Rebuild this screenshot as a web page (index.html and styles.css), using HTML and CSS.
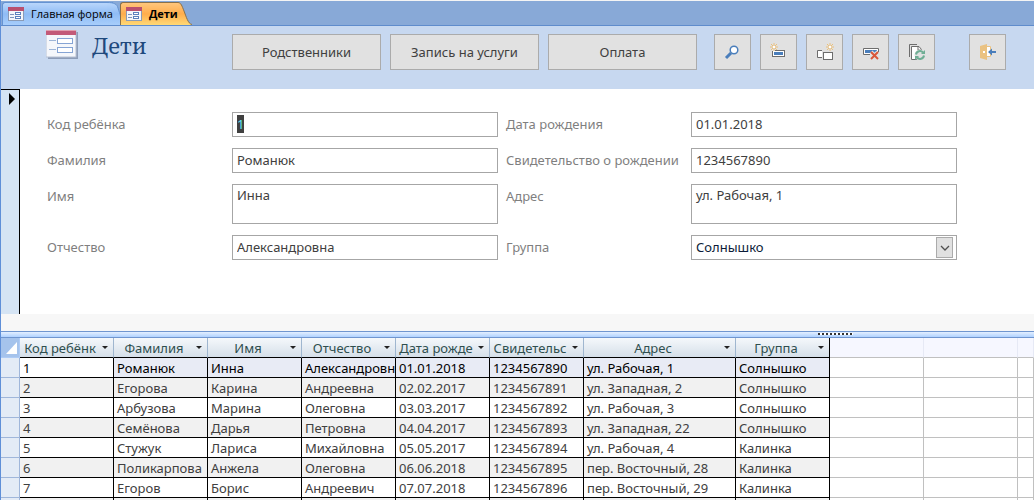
FILE: index.html
```html
<!DOCTYPE html>
<html lang="ru">
<head>
<meta charset="utf-8">
<title>Дети</title>
<link rel="stylesheet" href="styles.css">
</head>
<body>
<div class="window">
  <nav class="tabs">
    <a class="tab" href="#main">
      <svg class="tab-icon" viewBox="0 0 16 14"><use href="#form-icon"/></svg>
      <span class="tab-text">Главная форма</span>
      <svg class="tab-edge" viewBox="0 0 14 23"><path d="M0 .5C7 .5 10 2 11 6c1 4 2 5 2.500 8v9H0z" fill="url(#blue-tab)"/><path d="M0 .5C7 .5 10 2 11 6c1 4 2 5 2.500 8v9" fill="none" stroke="#6593d2"/></svg>
    </a>
    <a class="tab tab-active" href="#children" aria-current="page">
      <svg class="tab-icon" viewBox="0 0 16 14"><use href="#form-icon"/></svg>
      <span class="tab-text">Дети</span>
      <svg class="tab-edge" viewBox="0 0 14 23"><path d="M0 .5C3 .5 4 4 6 9c2 5 4 13 8 13.500V23H0z" fill="url(#orange-tab)"/><path d="M0 .5C3 .5 4 4 6 9c2 5 4 13 8 13.500" fill="none" stroke="#8a7048"/></svg>
    </a>
  </nav>

  <header class="header">
    <div class="heading">
      <svg class="heading-icon" viewBox="0 0 32 29">
        <rect x="2" y="2" width="30" height="27" fill="#8d9db8"/>
        <rect x="0" y="0" width="30" height="27" fill="#f5f7fb" stroke="#b7c1d3" stroke-width="1"/>
        <rect x="0" y="0" width="30" height="5" fill="#c35a78"/>
        <rect x="0" y="0" width="30" height="1" fill="#dfa0b0"/>
        <path d="M3 10.500h7M3 19.500h7" stroke="#9db5d8" stroke-width="1"/>
        <rect x="11.500" y="8.500" width="15" height="5" fill="#fff" stroke="#86a4d4"/>
        <rect x="11.500" y="17.500" width="15" height="5" fill="#fff" stroke="#86a4d4"/>
      </svg>
      <h1 class="title">Дети</h1>
    </div>
    <div class="actions">
      <button class="btn" type="button">Родственники</button>
      <button class="btn" type="button">Запись на услуги</button>
      <button class="btn" type="button">Оплата</button>
    </div>
    <div class="tools">
      <button class="tool" type="button" aria-label="Найти">
        <svg class="tool-icon" viewBox="0 0 18 18"><path d="M7 10 2 15" stroke="#4a7ebb" stroke-width="3"/><circle cx="10" cy="7" r="3.800" fill="#fff" stroke="#4a7ebb" stroke-width="1.500"/></svg>
      </button>
      <button class="tool" type="button" aria-label="Новая запись">
        <svg class="tool-icon" viewBox="0 0 18 18"><rect x="2.500" y="7.500" width="12" height="6" fill="#fff" stroke="#6d6d6d"/><rect x="4" y="9" width="9" height="3" fill="#4a7ebb"/><path d="M1 0h7v7H5v1H1z" fill="#e1e1e1"/><use href="#spark"/></svg>
      </button>
      <button class="tool" type="button" aria-label="Дублировать запись">
        <svg class="tool-icon" viewBox="0 0 18 18"><path d="M6 7.500H1.500v7H6" fill="#fff" stroke="#6d6d6d"/><rect x="7.500" y="9.500" width="9" height="7" fill="#fff" stroke="#6d6d6d"/><use href="#spark" x="10"/></svg>
      </button>
      <button class="tool" type="button" aria-label="Удалить запись">
        <svg class="tool-icon" viewBox="0 0 18 18"><path d="M8 11.500H1.500v-6h15V9" fill="#fff" stroke="#6d6d6d"/><rect x="3" y="7" width="12" height="3" fill="#4a7ebb"/><path d="m9 9 7 7M16 9l-7 7" stroke="#e1e1e1" stroke-width="4"/><path d="m9 9 7 7M16 9l-7 7" stroke="#d9573a" stroke-width="2"/></svg>
      </button>
      <button class="tool" type="button" aria-label="Обновить">
        <svg class="tool-icon" viewBox="0 0 18 18"><path d="M9 1.500H1.500V14" fill="none" stroke="#6d6d6d"/><path d="M9 3.500H3.500v13h7l3-9V6.500L11 3.500z" fill="#fff" stroke="#6d6d6d"/><path d="M10 3.500v3.500h3" fill="none" stroke="#6d6d6d"/><circle cx="12" cy="12" r="5.500" fill="#e1e1e1"/><path d="M8 11.500a4 4 0 0 1 7-2M16 12.500a4 4 0 0 1-7 2" fill="none" stroke="#6fae94" stroke-width="2"/><path d="M17 7v4h-4zM7 17v-4h4z" fill="#6fae94"/></svg>
      </button>
    </div>
    <button class="tool tool-exit" type="button" aria-label="Закрыть форму">
      <svg class="tool-icon" viewBox="0 0 18 18"><path d="M8 3.500h3.500v10H8" fill="#fff" stroke="#eac282"/><path d="M1 3l7-2v16l-7-2z" fill="#eac282"/><rect x="4" y="8" width="2" height="2" fill="#fff"/><path d="M9 9l4-3.500V8h4v2h-4v2.500z" fill="#4a7ebb"/></svg>
    </button>
  </header>

  <main class="record">
    <div class="selector"><svg class="selector-arrow" viewBox="0 0 6 12"><path d="M0 0v12l6-6z"/></svg></div>
    <form class="fields">
      <label class="label" for="code">Код ребёнка</label>
      <input class="field" id="code" value="1" autofocus>
      <label class="label" for="birth">Дата рождения</label>
      <input class="field" id="birth" value="01.01.2018">
      <label class="label" for="surname">Фамилия</label>
      <input class="field" id="surname" value="Романюк">
      <label class="label" for="cert">Свидетельство о рождении</label>
      <input class="field" id="cert" value="1234567890">
      <label class="label" for="name">Имя</label>
      <textarea class="field field-tall" id="name">Инна</textarea>
      <label class="label" for="address">Адрес</label>
      <textarea class="field field-tall" id="address">ул. Рабочая, 1</textarea>
      <label class="label" for="patronymic">Отчество</label>
      <input class="field" id="patronymic" value="Александровна">
      <label class="label" for="group">Группа</label>
      <div class="combo">
        <select class="field field-select" id="group"><option>Солнышко</option><option>Калинка</option></select>
        <span class="combo-button"><svg class="combo-arrow" viewBox="0 0 10 6"><path d="M1 1l4 4 4-4" fill="none" stroke="#505050" stroke-width="1.300"/></svg></span>
      </div>
    </form>
  </main>
  <div class="footer"></div>
  <div class="splitter"><span class="grip"></span></div>

  <table class="grid">
    <colgroup><col class="col-selector"><col class="col"><col class="col"><col class="col"><col class="col"><col class="col"><col class="col"><col class="col-wide"><col class="col"><col class="col"><col class="col"><col></colgroup>
    <thead>
      <tr>
        <td class="corner"><svg class="corner-mark" viewBox="0 0 11 12"><path d="M11 0v12H0z" fill="#fff"/></svg></td>
        <th><div class="head"><span class="head-text">Код ребёнк</span><i class="caret"></i></div></th>
        <th><div class="head"><span class="head-text">Фамилия</span><i class="caret"></i></div></th>
        <th><div class="head"><span class="head-text">Имя</span><i class="caret"></i></div></th>
        <th><div class="head"><span class="head-text">Отчество</span><i class="caret"></i></div></th>
        <th><div class="head"><span class="head-text">Дата рожде</span><i class="caret"></i></div></th>
        <th><div class="head"><span class="head-text">Свидетельс</span><i class="caret"></i></div></th>
        <th><div class="head"><span class="head-text">Адрес</span><i class="caret"></i></div></th>
        <th><div class="head"><span class="head-text">Группа</span><i class="caret"></i></div></th>
        <td class="blank"></td><td class="blank"></td><td class="blank"></td>
      </tr>
    </thead>
    <tbody>
      <tr class="current"><td class="row-selector"></td><td>1</td><td>Романюк</td><td>Инна</td><td>Александровна</td><td>01.01.2018</td><td>1234567890</td><td>ул. Рабочая, 1</td><td>Солнышко</td><td class="blank"></td><td class="blank"></td><td class="blank"></td></tr>
      <tr><td class="row-selector"></td><td>2</td><td>Егорова</td><td>Карина</td><td>Андреевна</td><td>02.02.2017</td><td>1234567891</td><td>ул. Западная, 2</td><td>Солнышко</td><td class="blank"></td><td class="blank"></td><td class="blank"></td></tr>
      <tr><td class="row-selector"></td><td>3</td><td>Арбузова</td><td>Марина</td><td>Олеговна</td><td>03.03.2017</td><td>1234567892</td><td>ул. Рабочая, 3</td><td>Солнышко</td><td class="blank"></td><td class="blank"></td><td class="blank"></td></tr>
      <tr><td class="row-selector"></td><td>4</td><td>Семёнова</td><td>Дарья</td><td>Петровна</td><td>04.04.2017</td><td>1234567893</td><td>ул. Западная, 22</td><td>Солнышко</td><td class="blank"></td><td class="blank"></td><td class="blank"></td></tr>
      <tr><td class="row-selector"></td><td>5</td><td>Стужук</td><td>Лариса</td><td>Михайловна</td><td>05.05.2017</td><td>1234567894</td><td>ул. Рабочая, 4</td><td>Калинка</td><td class="blank"></td><td class="blank"></td><td class="blank"></td></tr>
      <tr><td class="row-selector"></td><td>6</td><td>Поликарпова</td><td>Анжела</td><td>Олеговна</td><td>06.06.2018</td><td>1234567895</td><td>пер. Восточный, 28</td><td>Калинка</td><td class="blank"></td><td class="blank"></td><td class="blank"></td></tr>
      <tr><td class="row-selector"></td><td>7</td><td>Егоров</td><td>Борис</td><td>Андреевич</td><td>07.07.2018</td><td>1234567896</td><td>пер. Восточный, 29</td><td>Калинка</td><td class="blank"></td><td class="blank"></td><td class="blank"></td></tr>
      <tr><td class="row-selector"></td><td></td><td></td><td></td><td></td><td></td><td></td><td></td><td></td><td class="blank"></td><td class="blank"></td><td class="blank"></td></tr>
    </tbody>
  </table>
</div>

<svg class="defs" aria-hidden="true">
  <linearGradient id="blue-tab" x1="0" y1="0" x2="0" y2="1"><stop offset="0" stop-color="#b9d6fb"/><stop offset=".5" stop-color="#8fbcf5"/><stop offset="1" stop-color="#a7cdfb"/></linearGradient>
  <linearGradient id="orange-tab" x1="0" y1="0" x2="0" y2="1"><stop offset="0" stop-color="#ffc67c"/><stop offset=".5" stop-color="#ffad4c"/><stop offset="1" stop-color="#ffd976"/></linearGradient>
  <symbol id="form-icon" viewBox="0 0 16 14">
    <rect x="0.500" y="0.500" width="15" height="13" fill="#f4f6fa" stroke="#8b9bb5"/>
    <rect x="0" y="0" width="16" height="4" fill="#b9506f"/>
    <path d="M2 7.500h4M2 10.500h4" stroke="#7d95bd"/>
    <rect x="7.500" y="5.500" width="5" height="2" fill="#fff" stroke="#5b80bd"/>
    <rect x="7.500" y="9.500" width="5" height="2" fill="#fff" stroke="#5b80bd"/>
  </symbol>
  <symbol id="spark" viewBox="0 0 8 8" width="8" height="8">
    <path d="M4 0v8M0 4h8M1 1l6 6M7 1 1 7" stroke="#ecc07a" stroke-width="1"/>
    <rect x="3" y="3" width="2" height="2" fill="#fff"/>
  </symbol>
</svg>
<script src="script.js"></script>
</body>
</html>
```
FILE: styles.css
```css
* { box-sizing: border-box; }

body {
  margin: 0;
  font: 13px/18px "Noto Sans", "Open Sans", sans-serif;
  color: #404040;
  background: #fff;
}

.defs { position: absolute; width: 0; height: 0; }

.window {
  height: 100vh;
  overflow: hidden;
  border-left: 1px solid #5f8fd8;
  display: flex;
  flex-direction: column;
}

.window > * { flex-shrink: 0; }

.tabs {
  display: flex;
  align-items: flex-end;
  height: 26px;
  padding-left: 1px;
  border-top: 1px solid #f4f4f4;
  border-bottom: 1px solid #5f8ccc;
  background: #88a9d7;
}

.tab {
  position: relative;
  display: flex;
  align-items: center;
  gap: 7px;
  height: 23px;
  margin-right: 7px;
  padding-left: 5px;
  border: 1px solid #6593d2;
  border-width: 1px 0 0 1px;
  border-radius: 3px 0 0 0;
  background: linear-gradient(#b9d6fb, #8fbcf5 50%, #a7cdfb);
  color: #000;
  font: 500 11px/16px "Open Sans", "Noto Sans", sans-serif;
  text-decoration: none;
}

.tab-active {
  border-color: #8a7048;
  background: linear-gradient(#ffc67c, #ffad4c 50%, #ffd976);
  font-weight: 700;
}

.tab-text { position: relative; z-index: 1; }

.tab-edge {
  position: absolute;
  top: -1px;
  right: -8px;
  width: 14px;
  height: 23px;
}

.tab-active .tab-edge { right: -14px; }

.tab-icon { width: 16px; height: 14px; }

.header {
  display: flex;
  align-items: flex-start;
  height: 63px;
  padding: 8px 28px 0 45px;
  background: #c7d8f0;
}

.heading { display: flex; gap: 14px; width: 186px; margin-top: -4px; }
.heading-icon { width: 32px; height: 29px; }

.title {
  margin: 0;
  color: #1f497d;
  font: 22px/30px "Noto Serif", "Liberation Serif", serif;
}

.actions { display: flex; gap: 9px; }

.btn, .tool {
  height: 36px;
  padding: 0;
  border: 1px solid #ababab;
  border-radius: 0;
  background: #e1e1e1;
  color: #404040;
  font: inherit;
}

.btn { width: 149px; }

.tools { display: flex; gap: 9px; margin-left: 17px; }

.tool {
  display: flex;
  align-items: center;
  justify-content: center;
  width: 37px;
}

.tool-icon { flex: none; width: 18px; height: 18px; }
.tool-exit { margin-left: auto; }

.record { display: flex; height: 225px; }

.selector {
  width: 19px;
  padding: 3px 0 0 8px;
  border-top: 1px solid #000;
  border-right: 1px solid #000;
  background: #d5e4f4;
}

.selector-arrow { display: block; width: 6px; height: 12px; }

.fields {
  flex: 1;
  display: grid;
  grid-template-columns: 185px minmax(0, 266px) 193px minmax(0, 266px);
  align-content: start;
  gap: 11px 0;
  padding: 23px 27px 0;
}

.label { padding-top: 3px; color: #7f7f7f; }
.label:nth-of-type(even) { padding-left: 8px; }

.field {
  display: block;
  width: 100%;
  height: 25px;
  margin: 0;
  padding: 1px 4px 3px;
  border: 1px solid #a6a6a6;
  border-radius: 0;
  outline: 0;
  background: #fff;
  color: #404040;
  font: inherit;
  resize: none;
}

.field::selection { background: #404040; color: #5fe6f5; }
.field-tall { height: 40px; overflow: hidden; }
.field-select { appearance: none; color: #0c1c38; }

.combo { position: relative; }

.combo-button {
  position: absolute;
  top: 2px;
  right: 4px;
  display: flex;
  align-items: center;
  justify-content: center;
  width: 17px;
  height: 21px;
  border: 1px solid #ababab;
  background: #e1e1e1;
  pointer-events: none;
}

.combo-arrow { width: 10px; height: 6px; }

.footer { height: 17px; background: #f7f7f7; }

.splitter {
  height: 7px;
  padding: 1px 181px 0 0;
  border-top: 1px solid #6f95cf;
  border-bottom: 1px solid #6f95cf;
  background: linear-gradient(#e3efff, #b0d2ff);
}

.grip {
  display: block;
  width: 35px;
  height: 2px;
  margin-left: auto;
  background: repeating-linear-gradient(90deg, #333 0 2px, #fff 2px 4px);
}

.grid {
  width: 100%;
  table-layout: fixed;
  border-collapse: separate;
  border-spacing: 0;
}

.col-selector { width: 19px; }
.col { width: 94px; }
.col-wide { width: 152px; }

.grid td, .grid th {
  height: 20px;
  padding: 0 0 0 3px;
  border-right: 1px solid #000;
  border-bottom: 1px solid #000;
  overflow: hidden;
  white-space: nowrap;
  line-height: 18px;
}

.grid th {
  border-right-color: #9fb6cf;
  background: linear-gradient(#f5f8fb, #d5dfe9);
  color: #2f4f4f;
  font-weight: 400;
}

.head { display: flex; align-items: center; }
.head-text { flex: 1; }

.caret {
  width: 6px;
  margin: 0 5px;
  border: solid transparent;
  border-width: 3px 3px 0;
  border-top-color: #222;
}

.grid tbody tr:nth-child(even) td { background: #f1f1f1; }
.grid tbody .current td { background: #e8ebf5; color: #000; }
.grid tbody .current td:nth-child(2) { background: #fff; }

.grid tbody tr .row-selector.row-selector {
  border-color: #9fb6da;
  background: #e3ebf6;
}

.grid .corner {
  padding: 0;
  border-color: #aecbf5;
  background: #a5c3ec;
}

.corner-mark { display: block; width: 11px; height: 12px; margin-left: 5px; }

.grid tbody tr .blank.blank { border-color: #c0c0c0; background: #fff; }
.grid thead .blank { border-color: #e6e9f5 #e6e9f5 #c0c0c0; background: #f6f7ff; }
.grid thead th:nth-child(9) { border-right-color: #000; }
```
FILE: script.js
```js
document.getElementById("code").select();
```
